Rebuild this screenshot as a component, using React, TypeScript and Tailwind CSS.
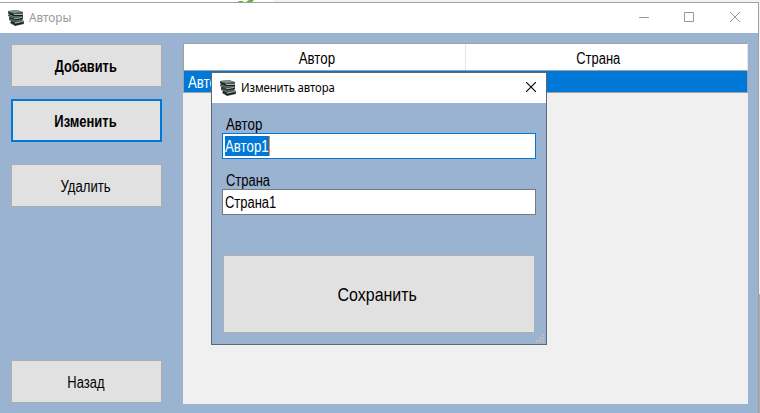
import type { ReactNode } from "react";

function Books() {
  return (
    <svg width="16" height="16" viewBox="0 0 16 16" className="block shrink-0">
      <path d="M0 1l9-1 6 2v2l-1 1 1 1v3l-1 1 2 1v3l-9 2-5-3 1-2-2-1v-2l1-1-2-1V5l1-1-1-1z" fill="#4b5856" />
      <path d="M0 1l9-1 5 2-8 1z" fill="#84928f" />
      <path d="M2 6l5 1 7-1-2-1-6 1-4-1zM3 10l4 1 7-1-2-1-6 1-3-1z" fill="#687572" />
      <path d="M0 2l6 2v2L1 4zM1 7l5 2v1L1 8zM3 11l4 2v2l-4-2z" fill="#202827" />
      <path d="M6 4h8v1H6zM6 8.4l8-1.4v1l-8 1.4zM7 12.6l8-1.6v1l-8 1.6z" fill="#aab5b2" />
      <path d="M6 5h9v1H6zM6 9.4l9-1.4v1l-9 1.4zM7 14l8-2v1.5L7 15.5z" fill="#151b1b" />
    </svg>
  );
}

function ActionButton({ children, className = "border border-[#adadad]" }: { children: ReactNode; className?: string }) {
  return (
    <button className={`flex h-[43px] w-[151px] shrink-0 items-center justify-center bg-[#e1e1e1] pr-[2px] pt-[2px] text-[16px] leading-[18px] ${className}`}>
      {children}
    </button>
  );
}

function EditDialog() {
  return (
    <div className="absolute left-[211px] top-[72px] flex h-[273px] w-[336px] flex-col border border-[#5c6875] bg-[#99b3d1]">
      <div className="flex h-[30px] shrink-0 items-center bg-white pl-2 pr-[10px]">
        <Books />
        <span className="ml-[5px] inline-block origin-left scale-x-[0.945] font-['Noto_Sans',sans-serif] text-[12px] leading-4 tracking-[-0.1px]">Изменить автора</span>
        <svg className="-mt-[2px] ml-auto" width="10" height="10" viewBox="0 0 10 10">
          <path d="M0 0l10 10M10 0L0 10" stroke="#000" strokeWidth="1.1" />
        </svg>
      </div>
      <div className="flex flex-col pl-[10px] pt-[13px] text-[16px] leading-[18px]">
        <label className="flex h-[17px] items-center pl-1">
          <span className="inline-block origin-left scale-x-[0.83]">Автор</span>
        </label>
        <div className="flex h-[26px] w-[314px] items-center border border-[#0078d7] bg-white pl-[2px]">
          <span className="flex h-5 w-[45px] items-center border-r border-[#ff8728] bg-[#0078d7] pt-[2px] text-white">
            <span className="inline-block origin-left scale-x-[0.83]">Автор1</span>
          </span>
        </div>
        <label className="mt-[13px] flex h-[17px] items-center pl-1">
          <span className="inline-block origin-left scale-x-[0.81]">Страна</span>
        </label>
        <div className="flex h-[26px] w-[314px] items-center border border-[#7a7a7a] bg-white pl-[2px] pt-[2px]">
          <span className="inline-block origin-left scale-x-[0.81]">Страна1</span>
        </div>
        <button className="ml-px mt-10 flex h-[78px] w-[312px] items-center justify-center border border-[#adadad] bg-[#e1e1e1] pr-1 pt-px text-[19px]">
          <span className="inline-block scale-x-[0.84]">Сохранить</span>
        </button>
      </div>
      <svg className="absolute bottom-[2px] right-[2px]" width="8" height="8" fill="#bfbfbf" shapeRendering="crispEdges">
        <path d="M6 0h2v2H6zM3 3h2v2H3zM6 3h2v2H6zM0 6h2v2H0zM3 6h2v2H3zM6 6h2v2H6z" />
      </svg>
    </div>
  );
}

export default function App() {
  return (
    <div className="relative flex h-[413px] w-[760px] flex-col overflow-hidden bg-[#f3f3f3] font-['Liberation_Sans',Arial,sans-serif] text-black">
      <div className="flex h-[2px] shrink-0">
        <div className="w-[273px] bg-white pl-[237px]">
          <svg className="block" width="18" height="2" fill="#5eb336">
            <path d="M1 2l1-1h4v1zM9 2l3-2h5l-2 2z" />
          </svg>
        </div>
      </div>
      <div className="flex min-h-0 flex-1">
        <div className="flex w-[759px] flex-col border-r border-t border-[#a0a0a0]">
          <header className="flex h-[30px] shrink-0 items-center bg-white pl-2 pr-[17px]">
            <Books />
            <span className="ml-[5px] inline-block origin-left scale-x-[0.98] font-['Noto_Sans',sans-serif] text-[12px] leading-4 text-[#999]">Авторы</span>
            <svg className="ml-auto" width="102" height="12" viewBox="0 0 102 12" fill="none" stroke="#999">
              <path d="M0 5.5h10M45.5 0.5h9v9h-9z" />
              <path d="M91 0l10 10M101 0L91 10" />
            </svg>
          </header>
          <main className="flex min-h-0 flex-1 bg-[#99b3d1] pl-[11px] pt-[10px]">
            <nav className="flex w-[172px] shrink-0 flex-col pt-px">
              <ActionButton className="border border-[#adadad] font-bold"><span className="inline-block scale-x-[0.8]">Добавить</span></ActionButton>
              <div className="h-3 shrink-0" />
              <ActionButton className="border-2 border-[#0078d7] font-bold"><span className="inline-block scale-x-[0.81]">Изменить</span></ActionButton>
              <div className="h-[22px] shrink-0" />
              <ActionButton><span className="inline-block scale-x-[0.82]">Удалить</span></ActionButton>
              <div className="h-[153px] shrink-0" />
              <ActionButton><span className="inline-block scale-x-[0.81]">Назад</span></ActionButton>
            </nav>
            <section className="h-[361px] w-[565px] bg-[#f0f0f0] text-[16px] leading-[18px]">
              <div className="flex h-7 border border-[#a0a0a0] border-r-[#e5e5e5] bg-white">
                <div className="flex w-[282px] items-center justify-center border-r border-[#e5e5e5] pr-[16px] pt-[3px]">
                  <span className="inline-block scale-x-[0.83]">Автор</span>
                </div>
                <div className="flex flex-1 items-center justify-center pr-[17px] pt-[3px]">
                  <span className="inline-block scale-x-[0.81]">Страна</span>
                </div>
              </div>
              <div className="flex h-[22px] border-x border-b border-[#a0a0a0] bg-[#0078d7] text-white">
                <div className="flex w-[282px] items-center pl-1 pt-[3px]">
                  <span className="inline-block origin-left scale-x-[0.83]">Автор1</span>
                </div>
              </div>
            </section>
          </main>
        </div>
        <div className="flex flex-1 flex-col">
          <div className="h-[292px] bg-[#f3f3f3]" />
          <div className="flex-1 bg-[#adadad]" />
        </div>
      </div>
      <EditDialog />
    </div>
  );
}
